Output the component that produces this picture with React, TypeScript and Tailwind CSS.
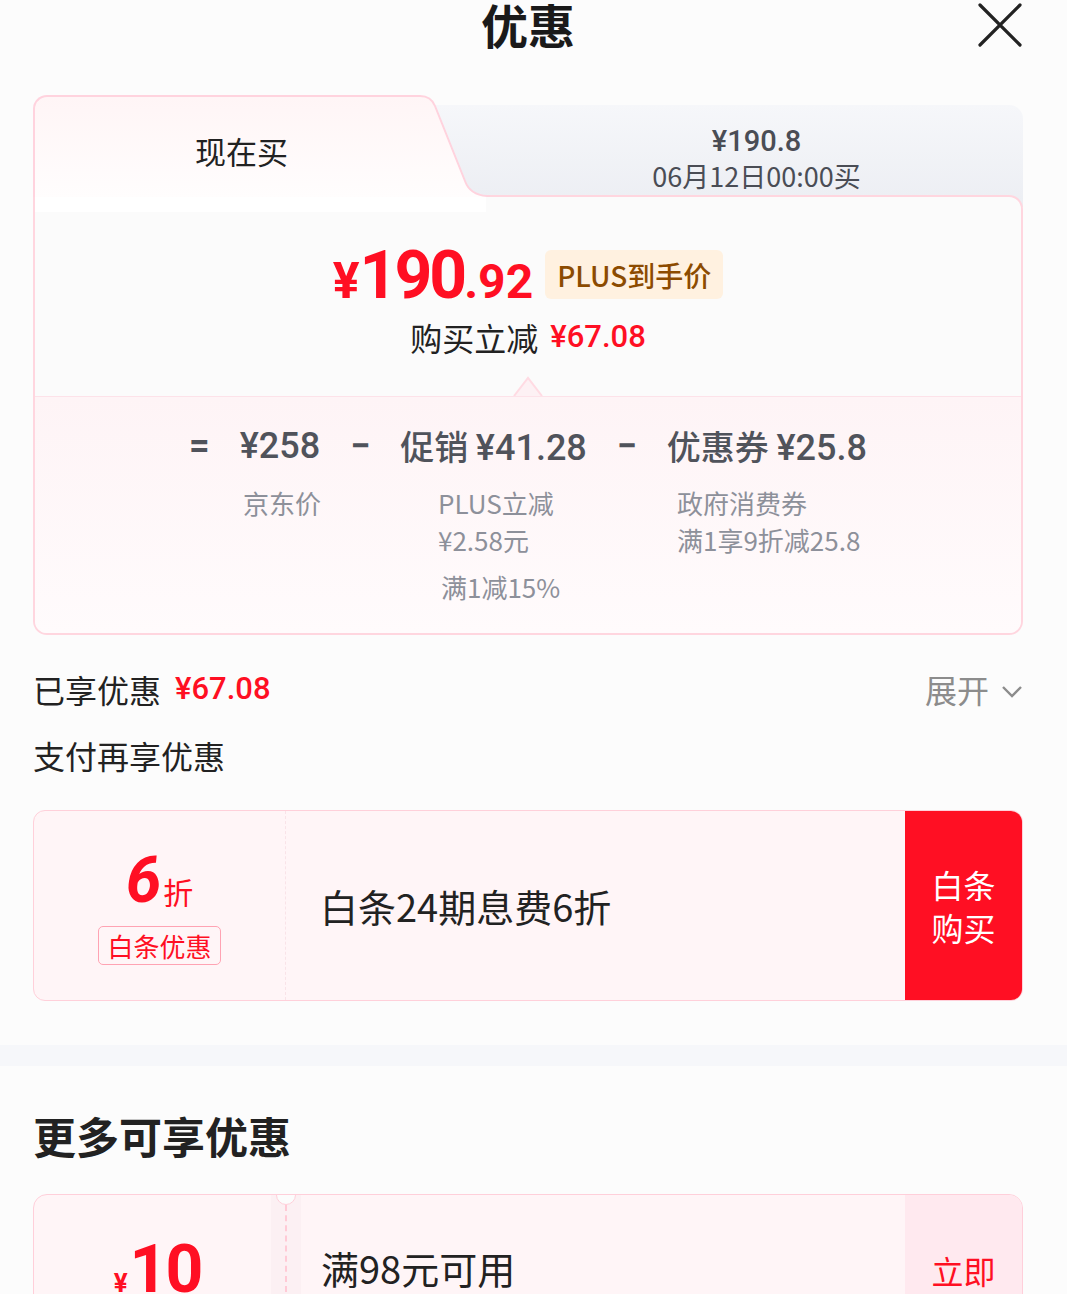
import React from 'react';

const cjk = { fontFamily: '"Noto Sans CJK SC", "Noto Sans", sans-serif' };
const num = { fontFamily: 'Roboto, "Noto Sans CJK SC", sans-serif' };

function TabSlant() {
  return (
    <svg width="80" height="102" viewBox="0 0 80 102" className="relative z-10 -mb-[2px] shrink-0 block">
      <defs>
        <linearGradient id="grayTab" x1="0" y1="0" x2="0" y2="1">
          <stop offset="0" stopColor="#f6f7fa" />
          <stop offset="1" stopColor="#eceef3" />
        </linearGradient>
        <linearGradient id="activeTab" x1="0" y1="0" x2="0" y2="1">
          <stop offset="0" stopColor="#fff5f6" />
          <stop offset="1" stopColor="#fffdfd" />
        </linearGradient>
      </defs>
      <rect x="0" y="10" width="80" height="92" fill="url(#grayTab)" />
      <path d="M0 0 H10 Q21 1 25 11 L55 86 Q60 100 77 101 H80 V102 H0 Z" fill="url(#activeTab)" />
      <path d="M0 1 H10 Q21 1 25 11 L55 86 Q60 100 77 101 H80" fill="none" stroke="#ffd3de" strokeWidth="2" />
    </svg>
  );
}

function PriceCard() {
  return (
    <div className="ml-[33px] mr-[44px]">
      <div className="flex h-[100px] items-end">
        <div className="relative z-10 -mb-[2px] flex h-[102px] w-[377px] shrink-0 items-center rounded-tl-[14px] border-l-2 border-t-2 border-[#ffd3de] bg-gradient-to-b from-[#fff5f6] to-[#fffdfd] pl-[160px] pt-[8px]">
          <span className="text-[31px] text-[#222]" style={cjk}>现在买</span>
        </div>
        <TabSlant />
        <div className="-mb-[12px] flex h-[102px] flex-1 flex-col items-center rounded-tr-[14px] bg-gradient-to-b from-[#f6f7fa] to-[#eceef3] pt-[18px] text-[#4a4d55]">
          <span className="text-[29px] font-medium leading-[36px]" style={num}>¥190.8</span>
          <span className="text-[27px] leading-[34px]" style={cjk}>06月12日00:00买</span>
        </div>
      </div>

      <div className="relative overflow-hidden rounded-b-[14px] rounded-tr-[14px] border-2 border-[#ffd6df] bg-[#fbfbfb]">
        <div className="flex h-[199px] flex-col items-center">
          <div className="h-[15px] w-[451px] self-start bg-white" />
          <div className="mt-[31px] flex items-end">
            <div className="flex items-baseline font-bold leading-none text-[#ff0f23]" style={num}>
              <span className="text-[50px]">¥</span>
              <span className="text-[66px] tracking-[-3px]">190</span>
              <span className="text-[48px]">.92</span>
            </div>
            <div className="mb-[10px] ml-[12px] flex h-[49px] items-center rounded-[6px] bg-[#fff1e0] px-[12px] text-[28px] font-medium text-[#8c4b00]" style={cjk}>
              PLUS到手价
            </div>
          </div>
          <div className="mt-[8px] flex h-[40px] items-center">
            <span className="text-[32px] text-[#222]" style={cjk}>购买立减</span>
            <span className="ml-[12px] text-[31px] font-medium text-[#ff0f23]" style={num}>¥67.08</span>
          </div>
          <svg width="32" height="20" viewBox="0 0 32 20" className="mt-auto block">
            <path d="M2 20 L16 2 L30 20" fill="#fdf1f4" stroke="#ffdbe3" strokeWidth="2" />
          </svg>
        </div>
        <div className="h-[237px] border-t border-[#fde2e9] bg-gradient-to-b from-[#fef4f6] to-[#fffbfc] pt-[29px]">
          <div className="flex h-[40px] items-center justify-center gap-[30px] text-[36px] font-medium text-[#50535b]">
            <span className="font-bold" style={num}>=</span>
            <span style={num}>¥258</span>
            <span className="font-bold" style={num}>−</span>
            <span><span className="text-[34px]" style={cjk}>促销 </span><span style={num}>¥41.28</span></span>
            <span className="font-bold" style={num}>−</span>
            <span><span className="text-[34px]" style={cjk}>优惠券 </span><span style={num}>¥25.8</span></span>
          </div>
          <div className="mt-[18px] flex pl-[208px] text-[26px] leading-[37px] text-[#8d909a]" style={cjk}>
            <div className="w-[195px]">京东价</div>
            <div className="w-[239px]">
              <div>PLUS立减</div>
              <div>¥2.58元</div>
              <div className="mt-[10px] pl-[3px]">满1减15%</div>
            </div>
            <div>
              <div>政府消费券</div>
              <div>满1享9折减25.8</div>
            </div>
          </div>
        </div>
      </div>
    </div>
  );
}

export default function App() {
  return (
    <div className="min-h-[1294px] w-[1067px] overflow-hidden bg-[#fcfcfc]" style={cjk}>
      <div className="relative flex h-[95px] justify-center pr-[11px]">
        <span className="-mt-[2px] text-[47px] font-bold leading-[52px] text-[#1a1a1a]">优惠</span>
        <svg width="46" height="46" viewBox="0 0 46 46" className="absolute right-[44px] top-[2px]">
          <path d="M3 3 L43 43 M43 3 L3 43" stroke="#222" strokeWidth="3.2" strokeLinecap="round" />
        </svg>
      </div>

      <PriceCard />

      <div className="ml-[33px] mr-[44px] mt-[32px] flex h-[44px] items-center justify-between text-[32px]">
        <div className="flex items-center">
          <span className="text-[#222]">已享优惠</span>
          <span className="ml-[14px] text-[31px] font-medium text-[#ff0f23]" style={num}>¥67.08</span>
        </div>
        <div className="flex items-center text-[#8c8c8c]">
          <span>展开</span>
          <svg width="22" height="14" viewBox="0 0 22 14" className="ml-[12px] mt-[6px]">
            <path d="M2 2 L11 11 L20 2" fill="none" stroke="#8c8c8c" strokeWidth="2.4" />
          </svg>
        </div>
      </div>
      <div className="ml-[33px] mr-[44px] mt-[22px] flex h-[44px] items-center text-[32px] text-[#222]">支付再享优惠</div>

      <div className="ml-[33px] mr-[44px] mt-[33px] flex h-[191px] overflow-hidden rounded-[12px] border border-[#ffd0da] bg-[#fff5f7]">
        <div className="flex w-[252px] shrink-0 flex-col items-center border-r border-dashed border-[#f9e3e8] pt-[42px]">
          <div className="flex items-end text-[#ff0f23]">
            <span className="text-[64px] font-bold italic leading-[56px]" style={num}>6</span>
            <span className="ml-[2px] text-[30px] leading-[36px]">折</span>
          </div>
          <div className="mt-[17px] flex h-[39px] items-center rounded-[5px] border border-[#ffa3b3] px-[8px] text-[26px] text-[#ff0f23]">白条优惠</div>
        </div>
        <div className="flex flex-1 items-center pl-[34px] text-[38px] text-[#222]">白条24期息费6折</div>
        <div className="flex w-[117px] shrink-0 flex-col items-center justify-center bg-[#ff0f23] text-[32px] leading-[43px] text-white">
          <span>白条</span>
          <span>购买</span>
        </div>
      </div>

      <div className="mt-[44px] h-[21px] bg-[#f6f7fa]" />

      <div className="ml-[33px] mt-[46px] text-[43px] font-bold leading-[46px] text-[#222]">更多可享优惠</div>

      <div className="relative ml-[33px] mr-[44px] mt-[36px] flex h-[190px] overflow-hidden rounded-[14px] border border-[#ffcfda] bg-[#fff5f7]">
        <div className="flex w-[237px] shrink-0 justify-center pt-[45px]">
          <div className="flex items-baseline pl-[10px] font-bold text-[#ff0f23]" style={num}>
            <span className="text-[26px]">¥</span>
            <span className="ml-[2px] text-[66px] leading-[60px] tracking-[-2px]">10</span>
          </div>
        </div>
        <div className="flex w-[30px] shrink-0 justify-center bg-[#fcf0f3]">
          <div className="h-full border-l-2 border-dashed border-[#ffcad6]" />
        </div>
        <div className="flex-1 pl-[20px] pt-[50px] text-[38px] leading-[46px] text-[#222]">满98元可用</div>
        <div className="w-[117px] shrink-0 bg-[#ffe9ef] pt-[55px] text-center text-[32px] leading-[40px] text-[#ff0f23]">立即</div>
        <div className="absolute left-[242px] top-[-10px] h-[20px] w-[20px] rounded-full border border-[#ffcfda] bg-[#fcfcfc]" />
      </div>
    </div>
  );
}
